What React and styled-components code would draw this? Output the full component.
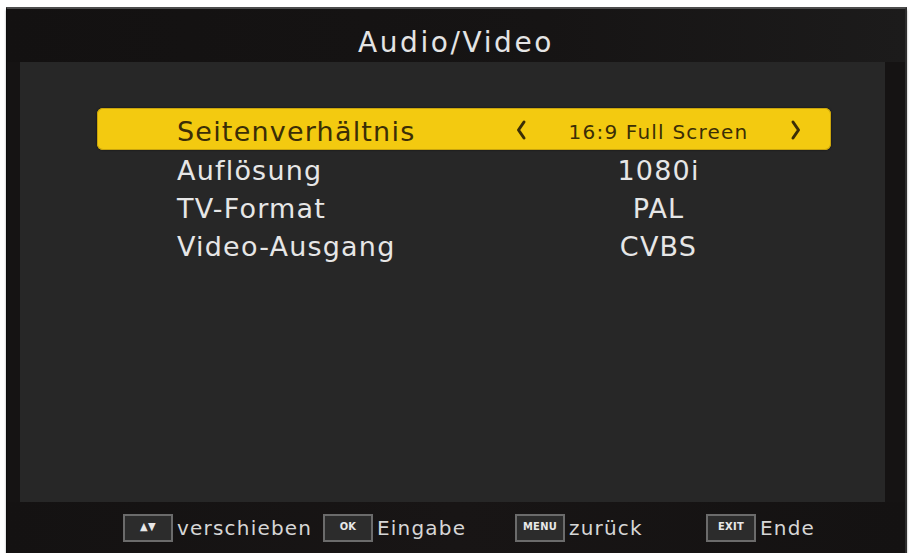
import React from "react";
import styled, { createGlobalStyle } from "styled-components";

const GlobalStyle = createGlobalStyle`
  html, body {
    margin: 0;
    padding: 0;
    background: #ffffff;
  }
  body {
    font-family: "DejaVu Sans", "Liberation Sans", sans-serif;
  }
`;

const Screen = styled.div`
  box-sizing: border-box;
  margin: 7px 0 0 6px;
  width: 901px;
  height: 546px;
  display: flex;
  flex-direction: column;
  background: #151313;
  border-top: 2px solid #4c4c4c;
  border-right: 2px solid #2e2e2e;
  border-left: 1px solid #0c0c0c;
  box-shadow: 0 3px 2px rgba(0, 0, 0, 0.35);
`;

const Header = styled.header`
  height: 53px;
  flex: none;
  display: flex;
  align-items: center;
  justify-content: center;
  padding-top: 14px;
  box-sizing: border-box;
  background: linear-gradient(90deg, #131111 0%, #161414 60%, #1c1b1b 100%);
`;

const Title = styled.h1`
  margin: 0;
  font-size: 28px;
  font-weight: normal;
  letter-spacing: 2.6px;
  color: #e4e4e4;
`;

const Panel = styled.main`
  flex: none;
  height: 440px;
  margin: 0 20px 0 13px;
  padding: 46px 54px 0 77px;
  box-sizing: border-box;
  background: #272727;
`;

const MenuList = styled.ul`
  list-style: none;
  margin: 0;
  padding: 0;
`;

const Row = styled.li`
  display: flex;
  align-items: center;
  box-sizing: border-box;
  height: ${(p) => (p.$selected ? "42px" : "38px")};
  padding: ${(p) => (p.$selected ? "5px 29px 0 80px" : "2px 29px 0 80px")};
  border-radius: 6px;
  background: ${(p) => (p.$selected ? "#f3ca10" : "transparent")};
  box-shadow: ${(p) =>
    p.$selected ? "inset 0 0 0 1px #c9a40c, 0 0 2px rgba(0,0,0,0.6)" : "none"};
  color: ${(p) => (p.$selected ? "#3b2e06" : "#e6e6e6")};
`;

const Label = styled.span`
  flex: 1;
  font-size: 27px;
  letter-spacing: 1.2px;
  white-space: nowrap;
`;

const ValueBox = styled.span`
  width: 287px;
  flex: none;
  display: flex;
  align-items: center;
  justify-content: space-between;
`;

const ArrowIcon = styled.svg`
  display: block;
  width: 12px;
  height: 22px;
  flex: none;
  margin-top: -4px;
  visibility: ${(p) => (p.$show ? "visible" : "hidden")};
`;

const Value = styled.span`
  font-size: ${(p) => (p.$small ? "20px" : "27px")};
  letter-spacing: 1.2px;
  white-space: nowrap;
`;

const Footer = styled.footer`
  flex: 1;
  display: grid;
  grid-template-columns: 200px 192px 191px 1fr;
  align-items: center;
  padding-left: 116px;
  padding-top: 1px;
  background: linear-gradient(90deg, #141212 0%, #181515 50%, #141212 100%);
`;

const Hint = styled.div`
  display: flex;
  align-items: center;
  gap: 4px;
`;

const Key = styled.span`
  box-sizing: border-box;
  width: 50px;
  height: 28px;
  display: flex;
  align-items: center;
  justify-content: center;
  border: 2px solid #6b6b6b;
  background: #2c2c2c;
  color: #e8e8e8;
  font-family: "DejaVu Sans Condensed", "DejaVu Sans", sans-serif;
  font-size: 11px;
  font-weight: bold;
  letter-spacing: 0.3px;
  padding-bottom: 4px;
`;

const HintText = styled.span`
  font-size: 20px;
  letter-spacing: 1.2px;
  color: #d6d6d6;
`;

function Chevron({ dir, show }) {
  const d = dir === "left" ? "M9 3 L3.5 11 L9 19" : "M3 3 L8.5 11 L3 19";
  return (
    <ArrowIcon $show={show} viewBox="0 0 12 22" aria-hidden="true">
      <path d={d} fill="none" stroke="#3b2e06" strokeWidth="3" strokeLinecap="round" strokeLinejoin="round" />
    </ArrowIcon>
  );
}

const items = [
  { label: "Seitenverhältnis", value: "16:9 Full Screen", selected: true },
  { label: "Auflösung", value: "1080i" },
  { label: "TV-Format", value: "PAL" },
  { label: "Video-Ausgang", value: "CVBS" },
];

const hints = [
  { key: "▲▼", text: "verschieben" },
  { key: "OK", text: "Eingabe" },
  { key: "MENU", text: "zurück" },
  { key: "EXIT", text: "Ende" },
];

export default function App() {
  return (
    <>
      <GlobalStyle />
      <Screen>
        <Header>
          <Title>Audio/Video</Title>
        </Header>
        <Panel>
          <MenuList>
            {items.map((it) => (
              <Row key={it.label} $selected={it.selected}>
                <Label>{it.label}</Label>
                <ValueBox>
                  <Chevron dir="left" show={!!it.selected} />
                  <Value $small={it.selected}>{it.value}</Value>
                  <Chevron dir="right" show={!!it.selected} />
                </ValueBox>
              </Row>
            ))}
          </MenuList>
        </Panel>
        <Footer>
          {hints.map((h) => (
            <Hint key={h.text}>
              <Key>{h.key}</Key>
              <HintText>{h.text}</HintText>
            </Hint>
          ))}
        </Footer>
      </Screen>
    </>
  );
}
